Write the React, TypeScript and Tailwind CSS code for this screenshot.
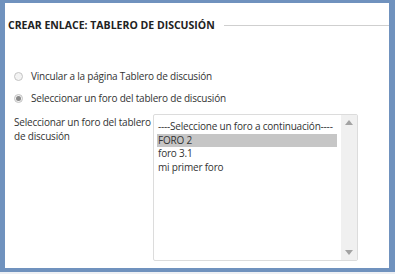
const font = { fontFamily: '"Open Sans", "Liberation Sans", sans-serif' };

const Radio = ({ checked }: { checked?: boolean }) => (
    <span className="w-[9px] h-[9px] rounded-full border border-[#c4c4c4] bg-[#f3f3f3] flex items-center justify-center shrink-0">
        {checked && <span className="w-[5px] h-[5px] rounded-full bg-[#8a8a8a]" />}
    </span>
);

const options = ["----Seleccione un foro a continuación----", "FORO 2", "foro 3.1", "mi primer foro"];

export default function App() {
    return (
        <div className="w-[395px] h-[274px] bg-[#eef0f4]" style={font}>
            <div className="h-[272px] border-l-[5px] border-r-[6px] border-t-[3px] border-b-[4px] border-[#7092be] bg-white text-[#333]">
                <div className="flex items-center pl-[3px] pt-[15px]">
                    <h1 className="text-[10.5px] font-bold text-[#222] leading-[14px]">CREAR ENLACE: TABLERO DE DISCUSIÓN</h1>
                    <div className="flex-1 h-px bg-[#cfcfcf] ml-[9px]" />
                </div>
                <div className="pl-[9px] pt-[37px] flex flex-col gap-[8px] text-[10px] tracking-[-0.2px]">
                    <label className="flex items-center gap-[8px] h-[14px]">
                        <Radio />
                        <span>Vincular a la página Tablero de discusión</span>
                    </label>
                    <label className="flex items-center gap-[8px] h-[14px]">
                        <Radio checked />
                        <span>Seleccionar un foro del tablero de discusión</span>
                    </label>
                </div>
                <div className="flex pl-[9px] pt-[9px] text-[10px] tracking-[-0.2px]">
                    <div className="w-[139px] leading-[14px] pt-[1px]">Seleccionar un foro del tablero de discusión</div>
                    <div className="w-[205px] h-[147px] border border-[#dcdcdc] rounded-[2px] flex">
                        <div className="flex-1 pl-[3px] pt-[5px] pr-[4px]">
                            {options.map((o, i) => (
                                <div key={o} className={`h-[13.5px] leading-[13.5px] px-[1px] whitespace-nowrap ${i === 1 ? "bg-[#c6c6c6]" : ""}`}>{o}</div>
                            ))}
                        </div>
                        <div className="w-[16px] bg-[#f0f0f0] flex flex-col justify-between items-center py-[5px]">
                            <svg width="8" height="5" viewBox="0 0 8 5"><path d="M0 5 L4 0 L8 5 Z" fill="#a3a3a3" /></svg>
                            <svg width="8" height="5" viewBox="0 0 8 5"><path d="M0 0 L8 0 L4 5 Z" fill="#a3a3a3" /></svg>
                        </div>
                    </div>
                </div>
            </div>
        </div>
    );
}
